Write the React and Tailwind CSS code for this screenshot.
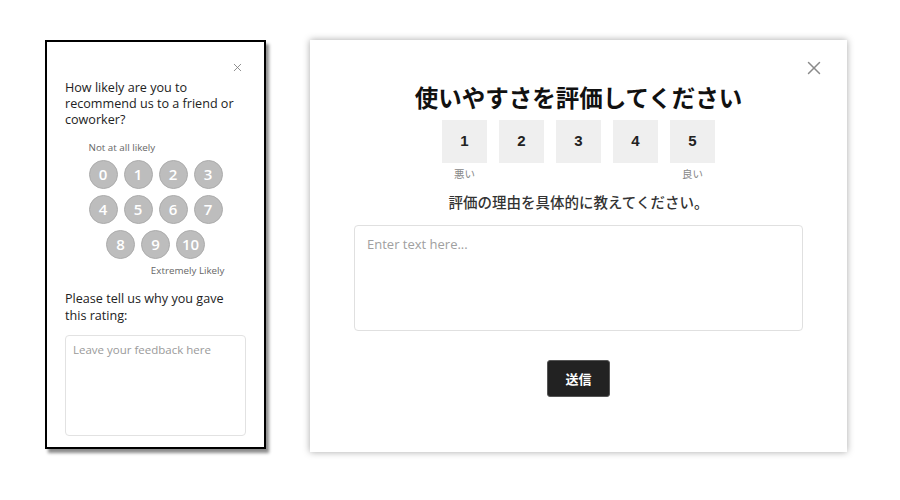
import { X } from "lucide-react";

const nps = [[0, 1, 2, 3], [4, 5, 6, 7], [8, 9, 10]];
const scores = [1, 2, 3, 4, 5];

function NpsCard() {
  return (
    <div className="w-[221px] h-[409px] bg-white border-2 border-black shadow-[3px_4px_3px_rgba(0,0,0,0.45)] px-[18px] pt-[17px] flex flex-col font-['Open_Sans',sans-serif] text-[#222]">
      {/* close */}
      <div className="flex justify-end h-[16px] items-center pr-[2px]">
        <X size={13} strokeWidth={1.5} className="text-[#777]" />
      </div>

      <p className="mt-[5px] text-[12.6px] leading-[16px]">
        How likely are you to recommend us to a friend or coworker?
      </p>

      {/* rating circles */}
      <div className="mt-[14px] self-center w-[134px] flex flex-col">
        <span className="text-[9.8px] leading-[12px] text-[#666]">Not at all likely</span>
        <div className="mt-[6px] flex flex-col items-center gap-[6px]">
          {nps.map((row, i) => (
            <div key={i} className="flex gap-[6px]">
              {row.map(n => (
                <div
                  key={n}
                  className="w-[29px] h-[29px] rounded-full bg-[#bdbdbd] border border-[#acacac] flex items-center justify-center text-white text-[15px] font-semibold"
                >
                  {n}
                </div>
              ))}
            </div>
          ))}
        </div>
        <span className="mt-[6px] -mr-[2px] self-end text-[9.8px] leading-[12px] text-[#666]">Extremely Likely</span>
      </div>

      <p className="mt-[13px] text-[12.6px] leading-[17px]">
        Please tell us why you gave this rating:
      </p>

      <textarea
        className="mt-[11px] h-[101px] w-full resize-none rounded-[4px] border border-[#e2e2e2] px-[7px] py-[6px] text-[11.5px] leading-[15px] placeholder:text-[#9a9a9a] outline-none"
        placeholder="Leave your feedback here"
      />
    </div>
  );
}

function UsabilityModal() {
  return (
    <div className="relative w-[537px] h-[412px] bg-white shadow-[0_0_7px_rgba(0,0,0,0.35)] flex flex-col items-center pt-[42px] font-['Noto_Sans_CJK_JP','Noto_Sans',sans-serif] text-[#111]">
      <button className="absolute top-[17px] right-[22px] text-[#8a8a8a]">
        <X size={22} strokeWidth={1.6} />
      </button>

      <h1 className="text-[23.5px] leading-[30px] font-bold">使いやすさを評価してください</h1>

      {/* scores */}
      <div className="mt-[8px] flex gap-[12px]">
        {scores.map(n => (
          <div key={n} className="flex flex-col items-center w-[45px]">
            <div className="w-[45px] h-[43px] bg-[#efefef] flex items-center justify-center text-[15px] font-bold text-[#222] font-['Liberation_Sans',sans-serif]">
              {n}
            </div>
            <span className="mt-[4px] h-[14px] text-[10.5px] leading-[14px] text-[#888]">
              {n === 1 ? "悪い" : n === 5 ? "良い" : ""}
            </span>
          </div>
        ))}
      </div>

      <p className="mt-[11px] text-[14.5px] leading-[20px] font-medium text-[#333]">評価の理由を具体的に教えてください。</p>

      <textarea
        className="mt-[13px] w-[449px] h-[106px] resize-none rounded-[4px] border border-[#e0e0e0] px-[12px] py-[8px] text-[13px] leading-[20px] placeholder:text-[#a0a0a0] outline-none font-['Open_Sans',sans-serif]"
        placeholder="Enter text here..."
      />

      <button className="mt-[29px] w-[63px] h-[37px] rounded-[3px] bg-[#222] border border-[#555] text-white text-[13px] font-bold">
        送信
      </button>
    </div>
  );
}

export default function App() {
  return (
    <div className="w-[900px] h-[500px] bg-white flex items-start gap-[44px] pl-[45px] pt-[40px]">
      <NpsCard />
      <UsabilityModal />
    </div>
  );
}
